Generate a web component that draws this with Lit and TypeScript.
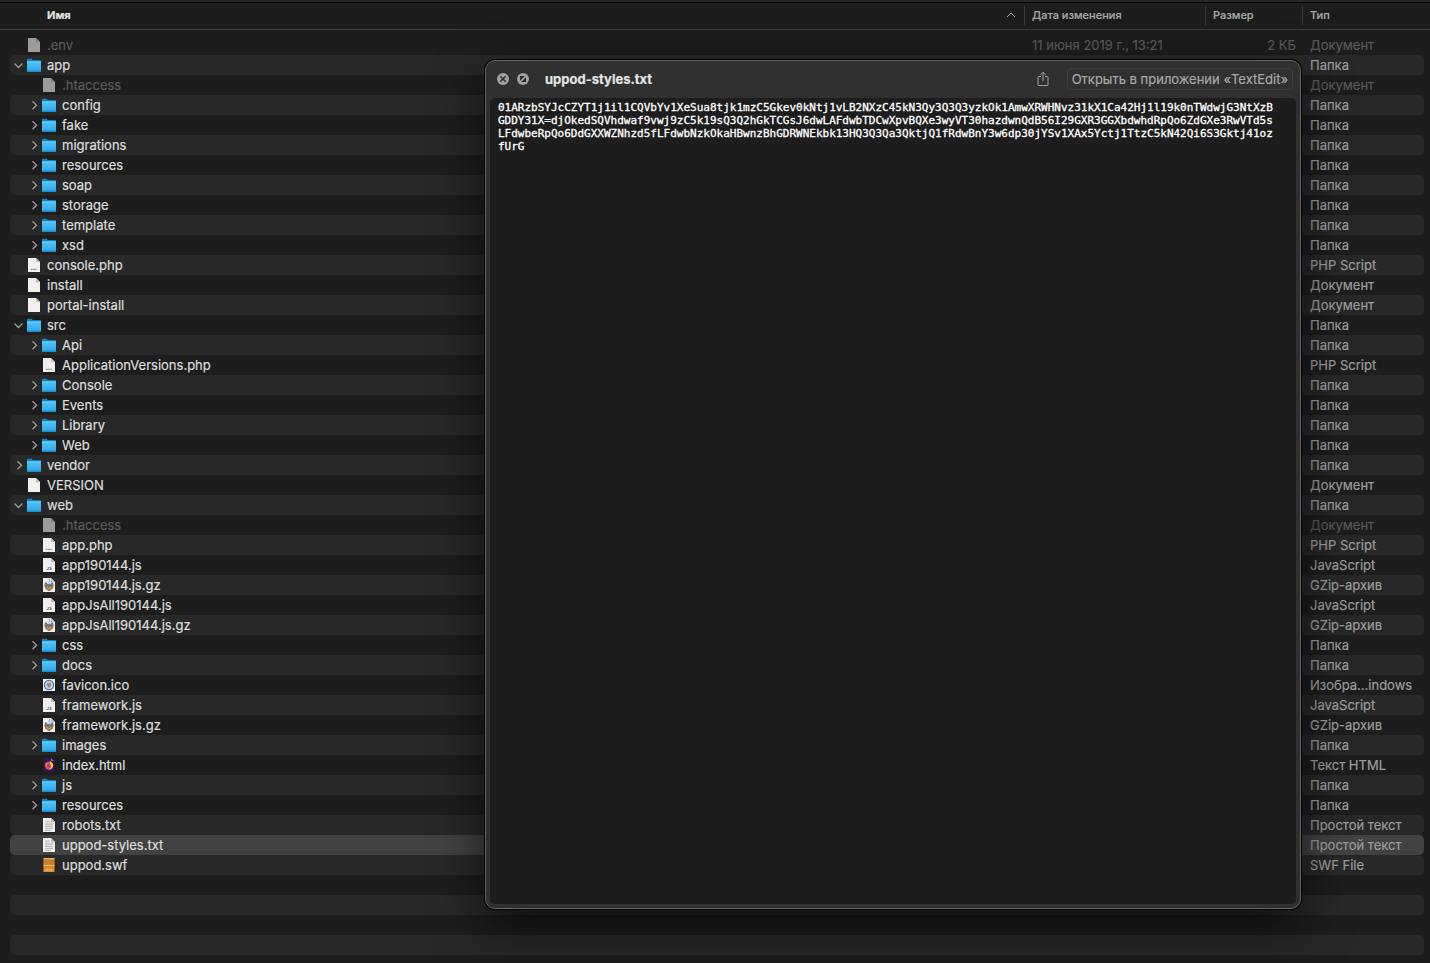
import { LitElement, html, svg, css, nothing } from "lit";
import { customElement, property, state } from "lit/decorators.js";
import { classMap } from "lit/directives/class-map.js";

type Kind = "folder" | "doc" | "script-php" | "script-js" | "archive" | "image" | "html" | "text" | "swf";

interface Entry {
  name: string;
  kind: Kind;
  type: string;
  depth: number;
  open?: boolean;
  dim?: boolean;
  selected?: boolean;
  date?: string;
  size?: string;
}

const MIN_ROWS = 46;

const folder = (name: string, depth = 1, open = false): Entry => ({ name, kind: "folder", type: "Папка", depth, open });
const file = (name: string, kind: Kind, type: string, depth = 1, extra: Partial<Entry> = {}): Entry => ({
  name,
  kind,
  type,
  depth,
  ...extra,
});

const ENTRIES: Entry[] = [
  file(".env", "doc", "Документ", 0, { dim: true, date: "11 июня 2019 г., 13:21", size: "2 КБ" }),
  folder("app", 0, true),
  file(".htaccess", "doc", "Документ", 1, { dim: true }),
  folder("config"),
  folder("fake"),
  folder("migrations"),
  folder("resources"),
  folder("soap"),
  folder("storage"),
  folder("template"),
  folder("xsd"),
  file("console.php", "script-php", "PHP Script", 0),
  file("install", "doc", "Документ", 0),
  file("portal-install", "doc", "Документ", 0),
  folder("src", 0, true),
  folder("Api"),
  file("ApplicationVersions.php", "script-php", "PHP Script"),
  folder("Console"),
  folder("Events"),
  folder("Library"),
  folder("Web"),
  folder("vendor", 0),
  file("VERSION", "doc", "Документ", 0),
  folder("web", 0, true),
  file(".htaccess", "doc", "Документ", 1, { dim: true }),
  file("app.php", "script-php", "PHP Script"),
  file("app190144.js", "script-js", "JavaScript"),
  file("app190144.js.gz", "archive", "GZip-архив"),
  file("appJsAll190144.js", "script-js", "JavaScript"),
  file("appJsAll190144.js.gz", "archive", "GZip-архив"),
  folder("css"),
  folder("docs"),
  file("favicon.ico", "image", "Изобра...indows"),
  file("framework.js", "script-js", "JavaScript"),
  file("framework.js.gz", "archive", "GZip-архив"),
  folder("images"),
  file("index.html", "html", "Текст HTML"),
  folder("js"),
  folder("resources"),
  file("robots.txt", "text", "Простой текст"),
  file("uppod-styles.txt", "text", "Простой текст", 1, { selected: true }),
  file("uppod.swf", "swf", "SWF File"),
];

const CONTENT =
  "01ARzbSYJcCZYT1j1il1CQVbYv1XeSua8tjk1mzC5Gkev0kNtj1vLB2NXzC45kN3Qy3Q3Q3yzkOk1AmwXRWHNvz31kX1Ca42Hj1l19k0nTWdwjG3NtXzB" +
  "GDDY31X=djOkedSQVhdwaf9vwj9zC5k19sQ3Q2hGkTCGsJ6dwLAFdwbTDCwXpvBQXe3wyVT30hazdwnQdB56I29GXR3GGXbdwhdRpQo6ZdGXe3RwVTd5s" +
  "LFdwbeRpQo6DdGXXWZNhzd5fLFdwbNzkOkaHBwnzBhGDRWNEkbk13HQ3Q3Qa3QktjQ1fRdwBnY3w6dp30jYSv1XAx5Yctj1TtzC5kN42Qi6S3Gktj41oz" +
  "fUrG";

const page = svg`
  <path d="M2 1h8l4 4v10H2z" fill="#f0f0f0"/>
  <path d="M10 1l4 4h-4z" fill="#bdbdbd"/>`;

const GLYPHS: Record<Kind, unknown> = {
  folder: svg`
    <path d="M1 2.600q0-.8.8-.8h3.700l1.200 1.200H14q1 0 1 1v10H1z" fill="#1583bf"/>
    <path d="M1 4.500h14V14q0 .8-.8.8H1.800Q1 14.800 1 14z" fill="url(#blue)"/>
    <path d="M1 4.500h14v.9H1z" fill="#6fd3fb"/>
    <path d="M1 13.600h14v1.200H1z" fill="#2190cf"/>`,
  doc: page,
  "script-php": svg`${page}<path d="M5 12.300h1.500M7.200 12.300h1.500M9.400 12.300h1.300" stroke="#8b8b8b" stroke-width="1.200"/>`,
  "script-js": svg`${page}<path d="M7.300 10v2.500H5.700M10.400 10.300H9v1h1.200v1.200H8.600" stroke="#777" stroke-width=".9" fill="none"/>`,
  archive: svg`${page}
    <path d="M3 7.500h10l-1.200 4L8 14.300l-3.800-2.800z" fill="#9a7448"/>
    <path d="M3.500 5.500h9L11 9H5z" fill="#5a6b7c"/>
    <path d="M5.800 5h4.500v2.200H5.800z" fill="#b4dcf6"/>
    <path d="M8.500 1.500V5" stroke="#a3aab0" stroke-width="1.400"/>
    <path d="M5.500 10l2.500 2 2.500-2" stroke="#d3ab78" stroke-width="1" fill="none"/>`,
  image: svg`
    <path d="M2 2h12v12H2z" fill="#f1f1ef"/>
    <circle cx="8" cy="8" r="4.600" fill="#c6d3de" stroke="#3f7db8" stroke-width="1.300"/>
    <path d="M6 6h4v2.800L8 11 6 8.800z" fill="#9c8f80"/>`,
  html: svg`
    <path d="M3 1h7l3 3v11H3z" fill="#2a1860"/>
    <path d="M10 1l3 3h-3z" fill="#8a63e8"/>
    <circle cx="8" cy="8.600" r="4.200" fill="#fb4b3d"/>
    <path d="M9 4.200q3.600 2 3 5-.8 3-4 3.400 3-2 1.800-4.400Q8.600 6.600 9 4.200z" fill="#ffc531"/>
    <circle cx="7.500" cy="8.800" r="1.600" fill="#7d3bd0"/>
    <path d="M4.300 6l2 .8-.6 2z" fill="#ff9a2e"/>`,
  text: svg`${page}
    <path d="M4 4h4.500M4 6h8M4 7.800h8M4 9.600h8M4 11.400h8M4 13.200h6" stroke="#ababab" stroke-width=".8"/>`,
  swf: svg`
    <path d="M2.500 1h11v14h-11z" fill="#dc8b2e"/>
    <path d="M2.500 1h11v1h-11z" fill="#f0b565"/>
    <path d="M3.500 3h9v4.500h-9z" fill="#cc7a22"/>
    <path d="M2.500 8h11v1h-11z" fill="#f0b25c"/>
    <path d="M4 13h8" stroke="#f8d49b" stroke-width="1.200" stroke-dasharray="1.500 .5"/>`,
};

@customElement("file-icon")
class FileIcon extends LitElement {
  @property() kind: Kind = "doc";

  static styles = css`
    :host {
      display: block;
      flex: none;
      width: 16px;
      height: 16px;
    }
    svg {
      display: block;
    }
  `;

  render() {
    return html`<svg width="16" height="16" viewBox="0 0 16 16" aria-hidden="true">
      <defs>
        <linearGradient id="blue" x1="0" y1="0" x2="0" y2="1">
          <stop offset="0" stop-color="#51c2f7" />
          <stop offset="1" stop-color="#2fa9e9" />
        </linearGradient>
      </defs>
      ${GLYPHS[this.kind]}
    </svg>`;
  }
}

@customElement("quick-look")
class QuickLook extends LitElement {
  @property() name = "";
  @property() content = "";

  static styles = css`
    :host {
      display: flex;
      flex-direction: column;
      box-sizing: border-box;
      padding: 0 4px 4px;
      border: 1px solid #626262;
      border-radius: 10px;
      background: #303030;
      box-shadow: 0 0 0 1px #000, 0 18px 50px rgba(0, 0, 0, 0.65);
      color: #e4e4e4;
    }
    .bar {
      display: flex;
      align-items: center;
      box-sizing: border-box;
      height: 37px;
      padding: 0 3px 2px 7px;
      flex: none;
    }
    button {
      padding: 0;
      border: 0;
      background: none;
      color: #a8a8a8;
      font: inherit;
    }
    svg {
      display: block;
    }
    .round {
      margin-right: 8px;
    }
    h1 {
      flex: 1;
      margin: 0 0 0 8px;
      font-size: 13px;
      line-height: 20px;
      font-weight: 700;
    }
    .share {
      margin-right: 18px;
    }
    .open {
      height: 22px;
      padding: 0 4px;
      border: 1px solid #3e3e3e;
      border-radius: 5px;
      font-size: 13px;
      line-height: 20px;
      white-space: nowrap;
    }
    .body {
      flex: 1;
      margin: 0;
      padding: 3px 20px 3px 8px;
      border-radius: 5px;
      background: #1d1d1d;
      color: #fff;
      font: 11px/13px "DejaVu Sans Mono", monospace;
      -webkit-text-stroke: 0.3px #fff;
      white-space: pre-wrap;
      word-break: break-all;
    }
  `;

  render() {
    return html`
      <header class="bar">
        <button class="round" aria-label="Закрыть">
          <svg width="12" height="12" viewBox="0 0 12 12">
            <circle cx="6" cy="6" r="6" fill="#a0a0a0" />
            <path d="M3.300 3.300l5.400 5.400M8.700 3.300l-5.400 5.400" stroke="#2c2c2c" stroke-width="1.500" />
          </svg>
        </button>
        <button class="round" aria-label="На весь экран">
          <svg width="12" height="12" viewBox="0 0 12 12">
            <circle cx="6" cy="6" r="6" fill="#a0a0a0" />
            <path d="M3 3h4.800L3 7.800zM9 9H4.200L9 4.200z" fill="#2c2c2c" />
          </svg>
        </button>
        <h1>${this.name}</h1>
        <button class="share" aria-label="Поделиться">
          <svg width="12" height="16" viewBox="0 0 12 16" fill="none" stroke="#a0a0a0" stroke-width="1">
            <path d="M4 5.500H2q-1 0-1 1v7q0 1 1 1h8q1 0 1-1v-7q0-1-1-1H8M6 10V1.500M3.500 3.800L6 1.300l2.500 2.500" />
          </svg>
        </button>
        <button class="open">Открыть в приложении «TextEdit»</button>
      </header>
      <pre class="body">${this.content}</pre>
    `;
  }
}

@customElement("app-root")
class AppRoot extends LitElement {
  @state() private entries = ENTRIES;

  static styles = css`
    :host {
      display: block;
      position: relative;
      box-sizing: border-box;
      height: 100vh;
      overflow: hidden;
      border-top: 2px solid #272727;
      background: #1d1d1d;
      color: #dedede;
      font-family: Inter, "Liberation Sans", sans-serif;
      font-size: 13px;
      font-weight: 400;
      -webkit-text-stroke: 0.2px;
    }
    .list {
      padding: 0 6px 0 10px;
      border-top: 1px solid #000;
      background: linear-gradient(#3d3d3d, #3d3d3d) 0 26px / 100% 1px no-repeat;
    }
    table {
      width: 100%;
      table-layout: fixed;
      border-collapse: separate;
      border-spacing: 0;
    }
    th {
      height: 32px;
      box-sizing: border-box;
      padding: 0 8px;
      font-size: 11px;
      line-height: 24px;
      font-weight: 500;
      text-align: left;
      vertical-align: top;
      color: #a6a6a6;
    }
    th + th {
      background: linear-gradient(#3a3a3a, #3a3a3a) 0 3px / 1px 19px no-repeat;
    }
    .sorted {
      padding-left: 37px;
      font-weight: 700;
      color: #e2e2e2;
    }
    .sort {
      display: flex;
      align-items: center;
      justify-content: space-between;
    }
    .date {
      width: 181px;
    }
    .size {
      width: 97px;
    }
    .type {
      width: 122px;
    }
    td {
      height: 20px;
      box-sizing: border-box;
      padding: 0 8px;
      line-height: 20px;
      color: #9d9d9d;
      white-space: nowrap;
      overflow: hidden;
    }
    td:first-child {
      padding: 0 8px 0 1px;
      border-radius: 5px 0 0 5px;
      color: #dedede;
    }
    td:last-child {
      border-radius: 0 5px 5px 0;
    }
    .num {
      padding-right: 6px;
      text-align: right;
    }
    tr:nth-child(even) td {
      background: #282828;
    }
    tr.selected td {
      background: #424242;
    }
    tr.dim td {
      color: #595959;
    }
    .dim file-icon {
      opacity: 0.6;
    }
    .name {
      display: flex;
      align-items: center;
      height: 20px;
    }
    .nested {
      padding-left: 15px;
    }
    .toggle {
      display: grid;
      place-items: center;
      flex: none;
      width: 15px;
      height: 20px;
      padding: 0;
      border: 0;
      background: none;
    }
    .label {
      padding-left: 5px;
    }
    svg {
      display: block;
    }
    .preview {
      position: absolute;
      top: 58px;
      right: 129px;
      bottom: 54px;
      left: 485px;
    }
  `;

  private toggle(entry: Entry) {
    this.entries = this.entries.map((e) => (e === entry ? { ...e, open: !e.open } : e));
  }

  private visible() {
    let shown = true;
    return this.entries.filter((e) => {
      if (e.depth === 0) {
        shown = e.kind !== "folder" || !!e.open;
        return true;
      }
      return shown;
    });
  }

  private row(e: Entry) {
    const arrow = e.open ? "M1.500 3.500L5.500 7.500 9.500 3.500" : "M4.500 1.200L8.500 5.200 4.500 9.200";
    return html`<tr class=${classMap({ dim: !!e.dim, selected: !!e.selected })}>
      <td>
        <div class=${classMap({ name: true, nested: e.depth > 0 })}>
          ${e.kind === "folder"
            ? html`<button class="toggle" aria-label=${e.name} aria-expanded=${String(!!e.open)} @click=${() => this.toggle(e)}>
                <svg width="11" height="11" viewBox="0 0 11 11">
                  <path d=${arrow} fill="none" stroke="#9a9a9a" stroke-width="1.400" />
                </svg>
              </button>`
            : html`<span class="toggle"></span>`}
          <file-icon kind=${e.kind}></file-icon>
          <span class="label">${e.name}</span>
        </div>
      </td>
      <td>${e.date ?? nothing}</td>
      <td class="num">${e.size ?? nothing}</td>
      <td>${e.type}</td>
    </tr>`;
  }

  render() {
    const rows = this.visible();
    const blanks = Array.from({ length: Math.max(0, MIN_ROWS - rows.length) });
    return html`
      <main class="list">
        <table>
          <thead>
            <tr>
              <th class="sorted" aria-sort="ascending">
                <div class="sort">
                  Имя
                  <svg width="10" height="6" viewBox="0 0 10 6">
                    <path d="M1 5l4-4 4 4" fill="none" stroke="#a6a6a6" stroke-width="1" />
                  </svg>
                </div>
              </th>
              <th class="date">Дата изменения</th>
              <th class="size">Размер</th>
              <th class="type">Тип</th>
            </tr>
          </thead>
          <tbody>
            ${rows.map((e) => this.row(e))}
            ${blanks.map(() => html`<tr><td></td><td></td><td></td><td></td></tr>`)}
          </tbody>
        </table>
      </main>
      <quick-look class="preview" name="uppod-styles.txt" content=${CONTENT}></quick-look>
    `;
  }
}
